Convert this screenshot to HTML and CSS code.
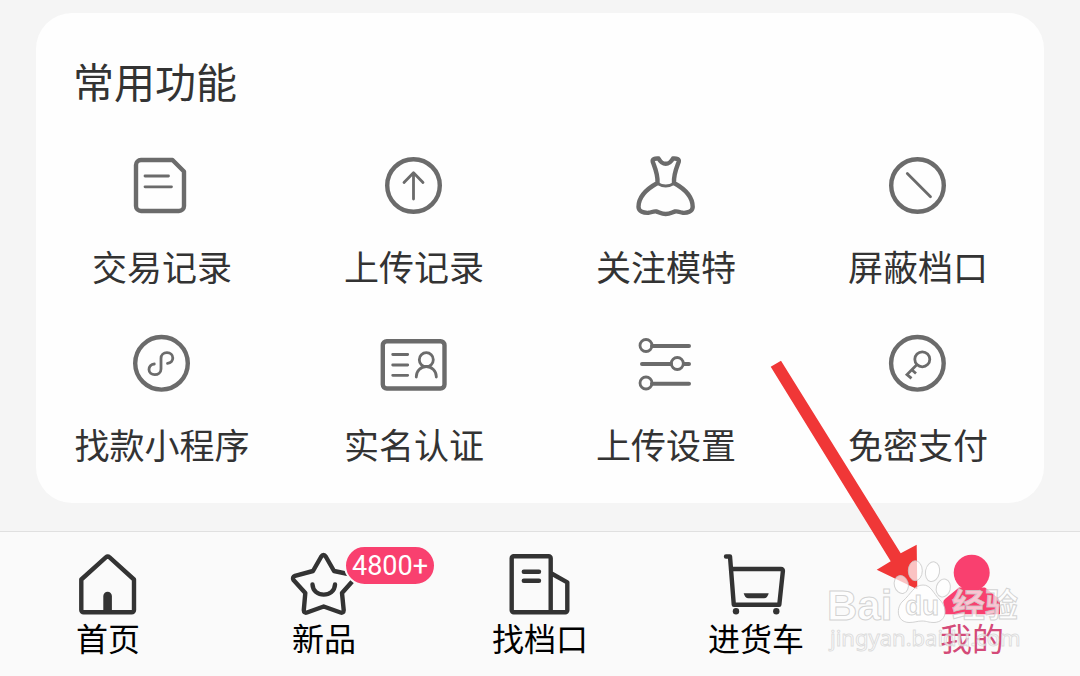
FILE: index.html
```html
<!DOCTYPE html>
<html lang="zh-CN">
<head>
<meta charset="utf-8">
<meta name="viewport" content="width=device-width, initial-scale=1">
<title>我的</title>
<link rel="stylesheet" href="styles.css">
</head>
<body>
<div class="page">
  <main class="content">
    <section class="card">
      <h1 class="card-title">常用功能</h1>
      <div class="grid">
        <button class="item" type="button">
          <svg class="icon" viewBox="0 0 72 72" aria-hidden="true"><path d="M15 10H46.500L58 21.500V56a5 5 0 0 1-5 5H15a5 5 0 0 1-5-5V15a5 5 0 0 1 5-5z"/><path class="thin" d="M19 26H42.500M19 36.800H45.500"/></svg>
          <span class="label">交易记录</span>
        </button>
        <button class="item" type="button">
          <svg class="icon" viewBox="0 0 72 72" aria-hidden="true"><circle cx="35.500" cy="35.500" r="26.300"/><path class="thin" d="M35.500 49V22.800M26 32.500L35.500 22.800L45 32.500"/></svg>
          <span class="label">上传记录</span>
        </button>
        <button class="item" type="button">
          <svg class="icon" viewBox="0 0 72 72" aria-hidden="true"><path d="M27.500 33C28 24 25 18 22.800 12C22 9 25 8.200 28.500 8.500C31 13 33 13.800 35.700 13.800C38.400 13.800 40.500 13 43 8.500C46.500 8.200 49.500 9 48.700 12C46.500 18 43.500 24 44 33C55 39 62.700 47 62.700 57C62.500 62 57 63 53 62.800C49.500 62.500 48.500 61 45 61.500C42 62.300 40 64 35.700 64C31.400 64 29.400 62.300 26.400 61.500C23 61 22 62.500 18.400 62.800C14 63 8.700 62 8.500 57C8.500 47 16.500 39 27.500 33z"/><path class="thin" d="M27.500 33.500Q35.700 38.500 44 33.500"/></svg>
          <span class="label">关注模特</span>
        </button>
        <button class="item" type="button">
          <svg class="icon" viewBox="0 0 72 72" aria-hidden="true"><circle cx="35.500" cy="35.500" r="26.300"/><path class="thin" d="M25.300 23.500L48.500 46.700"/></svg>
          <span class="label">屏蔽档口</span>
        </button>
        <button class="item" type="button">
          <svg class="icon" viewBox="0 0 72 72" aria-hidden="true"><circle cx="35.500" cy="35.300" r="26.300"/><path class="thin" d="M41.500 35.400C45 35 46.800 32.500 46.800 30C46.800 27 44.500 24.700 41 24.700C37.500 24.700 35 27 35 30.500V41C35 44.500 32 46.700 28.800 46.700C25.500 46.700 23 44.500 23 41.500C23 38.500 25 36.200 28.300 36"/></svg>
          <span class="label">找款小程序</span>
        </button>
        <button class="item" type="button">
          <svg class="icon" viewBox="0 0 72 72" aria-hidden="true"><rect x="4.800" y="13.200" width="61.700" height="47.300" rx="4"/><path class="thin" d="M14.700 26.500H29.700M14.700 37H29.700M14.700 47.300H29.700"/><circle class="thin" cx="48.300" cy="31.700" r="7"/><path class="thin" d="M38.300 49V48.500a10 10 0 0 1 20 0V49"/></svg>
          <span class="label">实名认证</span>
        </button>
        <button class="item" type="button">
          <svg class="icon" viewBox="0 0 72 72" aria-hidden="true"><path class="bar" d="M22 18H59M12 36H41M54 36H59M22 55.700H59"/><circle class="thin" cx="16" cy="17.500" r="6"/><circle class="thin" cx="47.300" cy="35.500" r="6"/><circle class="thin" cx="16" cy="55" r="6"/></svg>
          <span class="label">上传设置</span>
        </button>
        <button class="item" type="button">
          <svg class="icon" viewBox="0 0 72 72" aria-hidden="true"><circle cx="35.400" cy="35.300" r="26.300"/><circle class="thin" cx="40.300" cy="31.300" r="7.500"/><path class="thin miter" d="M34.800 36.800L25 46.600L29.500 50.400M29.800 41.800L34 45.500"/></svg>
          <span class="label">免密支付</span>
        </button>
      </div>
    </section>
  </main>
  <nav class="tabs">
    <a class="tab" href="#home">
      <svg class="tab-icon" viewBox="0 0 72 64" aria-hidden="true"><path d="M9.300 27.500L33.800 5.400Q35.700 3.800 37.600 5.400L62 27.500V58a2.300 2.300 0 0 1-2.300 2.300H11.600A2.300 2.300 0 0 1 9.300 58z"/><path class="solid" d="M31.300 60V44a4.300 4.300 0 0 1 8.600 0V60z"/></svg>
      <span>首页</span>
    </a>
    <a class="tab" href="#new">
      <span class="badge-anchor">
        <svg class="tab-icon" viewBox="0 0 72 64" aria-hidden="true"><path d="M33 5Q35.500 1 38 5L46 19L65 23Q68 25 66 27.500L54 41L55.700 58Q55.500 61.500 52.500 60.500L35.700 54.500L19 60.500Q16 61.500 15.800 58L17.300 41L5.500 28Q4 25 7 23.800L25 19z"/><path d="M24.500 32.500C25 46 46.500 46 47 32.500"/></svg>
        <span class="badge">4800+</span>
      </span>
      <span>新品</span>
    </a>
    <a class="tab" href="#stalls">
      <svg class="tab-icon" viewBox="0 0 72 64" aria-hidden="true"><path d="M9.700 4.200H44.700a2 2 0 0 1 2 2V60.300H9.700a2 2 0 0 1-2-2V6.200a2 2 0 0 1 2-2zM47.500 21.500L63.300 30.300V58.300a2 2 0 0 1-2 2H46M19.800 19.800H35M19.800 28.700H35"/></svg>
      <span>找档口</span>
    </a>
    <a class="tab" href="#cart">
      <svg class="tab-icon" viewBox="0 0 72 64" aria-hidden="true"><path d="M6 4.500H10L13.800 52.800H59.300L62.900 19Q63 17 61 17H11.500"/><path class="solid" d="M23.700 41.300H48.700Q47.500 46.300 44 46.300H28.400Q24.900 46.300 23.700 41.300z"/><circle class="solid" cx="16" cy="59.300" r="3.200"/><circle class="solid" cx="56.300" cy="59.300" r="3.200"/></svg>
      <span>进货车</span>
    </a>
    <a class="tab active" href="#me" aria-current="page">
      <svg class="tab-icon" viewBox="0 0 72 64" aria-hidden="true"><circle class="solid" cx="35.700" cy="20.700" r="18"/><path class="solid" d="M23 35.500H49L62 46Q64 48 64 51V62.300H9L7.300 50Q7.300 48 9.500 46.500z"/></svg>
      <span>我的</span>
    </a>
  </nav>
  <svg class="overlay" viewBox="0 0 320 340" aria-hidden="true">
    <path class="arrow" d="M10.700 30.700L21 24.700L140.700 217.300L156.700 208.700L157.300 253.300L116.700 233.700L130.700 225.300z"/>
    <g class="mark">
      <ellipse cx="141.300" cy="248.500" rx="7" ry="9" transform="rotate(-15 141.300 248.500)"/>
      <ellipse cx="155.300" cy="234.700" rx="7" ry="10"/>
      <ellipse cx="172.500" cy="235.700" rx="7" ry="10" transform="rotate(12 172.500 235.700)"/>
      <ellipse cx="183.300" cy="252" rx="7" ry="9" transform="rotate(15 183.300 252)"/>
      <path d="M163 249C171 249 173 257 180 264C188 272 187 286 174 286.500C168 286.500 167 285 162 285C157 285 155 286.500 149 286.500C136 286 136 271 143 265C151 258 154 249 163 249z"/>
      <text class="wm-logo" x="67" y="284">Bai</text>
      <text class="wm-du" x="145" y="279">du</text>
      <text class="wm-cn" x="192" y="281">经验</text>
      <text class="wm-url" x="70" y="310">jingyan.baidu.com</text>
    </g>
  </svg>
</div>
</body>
</html>
```
FILE: styles.css
```css
* {
  box-sizing: border-box;
}

body {
  margin: 0;
  background: #f5f5f5;
  color: #333;
  font-family: Roboto, "Noto Sans CJK SC", sans-serif;
}

.page {
  position: relative;
  display: flex;
  flex-direction: column;
  min-height: 100vh;
}

.content {
  flex: 1;
  padding: 13px 36px 28px;
}

.card {
  padding: 43px 0 31px;
  border-radius: 36px;
  background: #fefefe;
}

.card-title {
  margin: 0 0 38px;
  padding-left: 37px;
  font-size: 41px;
  font-weight: 400;
  line-height: 56px;
}

.grid {
  display: grid;
  grid-template-columns: repeat(4, 1fr);
  row-gap: 34px;
}

.item {
  display: flex;
  flex-direction: column;
  align-items: center;
  gap: 24px;
  padding: 0;
  border: 0;
  background: none;
  color: inherit;
  font: inherit;
}

.icon,
.tab-icon {
  display: block;
  width: 72px;
  fill: none;
  stroke-width: 4.400;
  stroke-linecap: round;
  stroke-linejoin: round;
}

.icon {
  height: 72px;
  stroke: #6b6b6b;
}

.icon .thin {
  stroke-width: 2.800;
}

.icon .bar {
  stroke-width: 4;
}

.icon .miter {
  stroke-linecap: butt;
  stroke-linejoin: miter;
}

.label {
  font-size: 35px;
  line-height: 48px;
  white-space: nowrap;
}

.tabs {
  display: grid;
  grid-template-columns: repeat(5, 1fr);
  padding: 20px 0 16px;
  border-top: 1px solid #e0e0e0;
  background: #fafafa;
}

.tab {
  display: flex;
  flex-direction: column;
  align-items: center;
  gap: 4px;
  color: #000;
  font-size: 32px;
  line-height: 40px;
  text-decoration: none;
}

.tab-icon {
  height: 64px;
  stroke: #333;
}

.tab-icon .solid {
  fill: #333;
  stroke: none;
}

.active {
  color: #d44a78;
}

.active .tab-icon .solid {
  fill: #f9406f;
}

.badge-anchor {
  position: relative;
}

.badge {
  position: absolute;
  top: -7px;
  left: 56px;
  padding: 2px 6px 0;
  border: 2px solid #fafafa;
  border-radius: 21px;
  background: #f9406f;
  color: #fff;
  font-size: 27px;
  line-height: 35px;
}

.overlay {
  position: absolute;
  right: 0;
  bottom: 0;
  width: 320px;
  height: 340px;
  pointer-events: none;
}

.arrow {
  fill: #f03737;
}

.mark {
  fill: #fff;
  fill-opacity: 0.700;
  stroke: #c8c8c8;
  stroke-opacity: 0.800;
  stroke-width: 1;
}

.wm-logo,
.wm-du {
  font-family: "Liberation Sans", sans-serif;
  font-weight: 700;
}

.wm-logo {
  font-size: 42px;
}

.wm-du {
  font-size: 28px;
}

.wm-cn {
  font-family: "Noto Sans CJK SC", sans-serif;
  font-size: 33px;
  font-weight: 700;
}

.wm-url {
  font-family: "Noto Sans", sans-serif;
  font-size: 22px;
  stroke-opacity: 0.600;
}
```
